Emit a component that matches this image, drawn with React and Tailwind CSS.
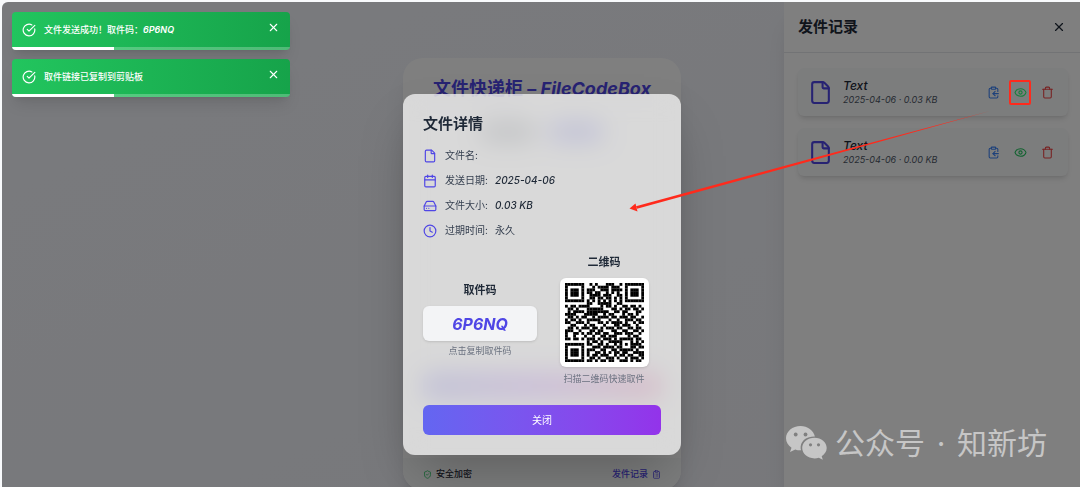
import React from 'react';
import {
  Calendar,
  CircleCheckBig,
  ClipboardCopy,
  ClipboardList,
  Clock,
  Eye,
  File,
  HardDrive,
  ShieldCheck,
  Trash,
  X,
} from 'lucide-react';

const qrRows = [
  '11111110010100011100101111111',
  '10000010001011110111001000001',
  '10111010111001110111101011101',
  '10111010110110010101001011101',
  '10111010011110111001101011101',
  '10000010011011011010101000001',
  '11111110101010101010101111111',
  '00000000110011111001100000000',
  '10110111100001011010011011010',
  '01101000111111000110101101101',
  '01011110111111110011011000110',
  '11110001111100101100010110100',
  '01101011001011110110111011001',
  '10110100111110001001001110110',
  '11001110100011010111101001011',
  '00110001011000100011011100100',
  '01101011101101011101100110110',
  '11100100011011000110011001101',
  '10011010110110110011101110010',
  '10010001001001101110000101100',
  '11011010111010111010111110110',
  '00000000101101001111100010101',
  '11111110110011010010101011110',
  '10000010001110111101100011011',
  '10111010111001100110111110100',
  '10111010100110101011011001111',
  '10111010101101110010110110011',
  '10000010011010011101001011101',
  '11111110110101101100111010110',
];

function QrCode() {
  return (
    <svg viewBox="0 0 29 29" className="w-[79px] h-[79px]">
      {qrRows.map((row, y) =>
        row.split('').map((cell, x) =>
          cell === '1' ? <rect key={`${x}-${y}`} x={x} y={y} width="1.04" height="1.04" fill="#000" /> : null
        )
      )}
    </svg>
  );
}

function Toast({ children }) {
  return (
    <div className="w-[278px] h-[38px] flex flex-col rounded overflow-hidden shadow-lg bg-linear-to-r from-[#22c55e] to-[#16a34a] text-white">
      <div className="flex-1 flex items-center gap-2 px-2.5">
        <CircleCheckBig size={14} />
        <p className="flex-1 text-[9px] font-medium">{children}</p>
        <button className="-mt-1">
          <X size={13} />
        </button>
      </div>
      <div className="h-[3px] bg-white/25">
        <div className="h-full w-[102px] bg-white" />
      </div>
    </div>
  );
}

function DetailRow({ icon: Icon, label, value, latin }) {
  return (
    <div className="flex items-center h-[25px] text-[10px] text-[#374151]">
      <Icon size={14} className="text-[#4f46e5] mr-2" />
      <span className="w-[50px]">{label}</span>
      <span className={latin ? 'italic font-medium text-[#1f2937]' : ''}>{value}</span>
    </div>
  );
}

function Record({ size, marked }) {
  return (
    <li className="flex items-center h-12 px-2.5 rounded-md bg-gray-50 shadow-md">
      <File size={25} className="text-[#4f46e5] mr-2.5" />
      <div className="flex-1 italic">
        <p className="text-xs leading-4 font-medium text-[#1f2937]">Text</p>
        <p className="text-[9px] leading-3 text-[#4b5563]">2025-04-06 · {size} KB</p>
      </div>
      <div className="flex gap-[5px]">
        <button className="w-[22px] h-[25px] flex items-center justify-center text-[#3b82f6]">
          <ClipboardCopy size={13} />
        </button>
        <button
          className={
            marked
              ? 'relative z-30 w-[22px] h-[25px] flex items-center justify-center rounded-xs text-[#16803c] border-2 border-[#ff2a1c]'
              : 'w-[22px] h-[25px] flex items-center justify-center text-[#22c55e]'
          }
        >
          <Eye size={13} />
        </button>
        <button className="w-[22px] h-[25px] flex items-center justify-center text-[#ef4444]">
          <Trash size={13} />
        </button>
      </div>
    </li>
  );
}

export default function App() {
  return (
    <div className="h-screen flex flex-col pt-[2px] pl-[2px] bg-slate-50 font-['Inter','Noto_Sans_CJK_SC',sans-serif]">
      <div className="relative flex-1 overflow-hidden rounded-tl-md bg-linear-to-br from-[#f3f5fb] to-[#eff0f6]">
        <main className="flex justify-center pt-14 pl-[2px]">
          <div className="w-[278px] rounded-[20px] overflow-hidden bg-white shadow-xl">
            <div className="h-[400px] px-5 pt-4">
              <h1 className="text-center text-lg leading-[30px] font-bold text-[#4f46e5] whitespace-nowrap">
                文件快递柜 – <span className="italic">FileCodeBox</span>
              </h1>
              <div className="flex justify-center gap-3 mt-[18px]">
                <div className="w-14 h-5 rounded-full bg-gray-500" />
                <div className="w-14 h-5 rounded-full bg-[#6366f1]" />
              </div>
              <div className="mt-[230px] h-7 rounded-lg bg-linear-to-r from-[#6366f1] via-[#a855f7] to-[#ec4899]" />
            </div>
            <footer className="h-8 px-5 flex items-center justify-between bg-gray-50 text-[9px] font-medium text-[#1f2937]">
              <span className="flex items-center gap-1">
                <ShieldCheck size={9} className="text-[#22c55e]" />
                安全加密
              </span>
              <button className="flex items-center gap-1 text-[#4f46e5]">
                发件记录
                <ClipboardList size={9} />
              </button>
            </footer>
          </div>
        </main>

        <aside className="absolute top-0 right-0 bottom-0 w-[296px] bg-white shadow-xl">
          <div className="h-[51px] flex items-center justify-between px-[14px] border-b border-gray-200">
            <h2 className="text-[15px] font-bold text-[#1f2937]">发件记录</h2>
            <button className="text-[#1f2937]">
              <X size={14} />
            </button>
          </div>
          <ul className="flex flex-col gap-3 pl-[14px] pr-3 pt-[15px]">
            <Record size="0.03" marked />
            <Record size="0.00" />
          </ul>
        </aside>

        <div className="absolute inset-0 z-10 bg-black/50 flex items-start justify-center pt-[92px] pl-[2px]">
          <div
            role="dialog"
            className="w-[278px] px-5 pt-[18px] pb-5 rounded-xl bg-white/70 backdrop-blur-md shadow-2xl"
          >
            <h2 className="text-[15px] leading-6 font-bold text-[#1f2937] mb-[7px]">文件详情</h2>
            <DetailRow icon={File} label="文件名:" />
            <DetailRow icon={Calendar} label="发送日期:" value="2025-04-06" latin />
            <DetailRow icon={HardDrive} label="文件大小:" value="0.03 KB" latin />
            <DetailRow icon={Clock} label="过期时间:" value="永久" />

            <div className="grid grid-cols-2 gap-2.5 items-center text-center mt-[11px]">
              <div>
                <h3 className="text-[11px] leading-4 font-bold text-[#1f2937] mb-2">取件码</h3>
                <button className="w-full h-[35px] rounded-md bg-[#f3f4f6] shadow text-base italic font-bold text-[#4f46e5]">
                  6P6NQ
                </button>
                <p className="mt-1 text-[9px] leading-3 text-[#6b7280]">点击复制取件码</p>
              </div>
              <div className="flex flex-col items-center">
                <h3 className="text-[11px] leading-4 font-bold text-[#1f2937] mb-2">二维码</h3>
                <div className="p-[5px] rounded-md bg-white shadow">
                  <QrCode />
                </div>
                <p className="mt-1.5 text-[9px] leading-3 text-[#6b7280]">扫描二维码快速取件</p>
              </div>
            </div>

            <button className="mt-5 w-full h-[30px] rounded-md bg-linear-to-r from-[#6366f1] to-[#9333ea] text-[10px] text-white">
              关闭
            </button>
          </div>
        </div>

        <div className="absolute top-2.5 left-2.5 z-20 flex flex-col gap-[9px]">
          <Toast>
            文件发送成功！取件码：<span className="italic font-semibold">6P6NQ</span>
          </Toast>
          <Toast>取件链接已复制到剪贴板</Toast>
        </div>

        <svg className="absolute top-[106px] left-[626px] z-20 w-[364px] h-[106px]" viewBox="0 0 364 106">
          <path d="M8 98.200 L180 51.500 L362 3 L180 53.700 L9 100.800 Z" fill="#ff2a1c" />
          <path d="M1.500 100.500 L7.500 95.500 L9.500 103.500 Z" fill="#ff2a1c" />
        </svg>

        <div className="absolute right-[33px] bottom-[22px] z-20 flex items-center text-[#c6c6c6]">
          <svg viewBox="0 0 41 34" className="w-[41px] h-[34px] mr-2" fill="currentColor">
            <path d="M14.500 0C6.500 0 0 5.500 0 12.300c0 3.900 2.100 7.200 5.500 9.500L4 26l5.300-2.600c1.800.6 3.500.8 5.700.8-.4-1.300-.5-2.600-.3-3.900C15.600 14 21.500 10.300 28.900 10.600 27.500 4.400 21.500 0 14.500 0z" />
            <path d="M28.500 11.800c-6.900 0-12.300 4.600-12.300 10.300s5.400 10.300 12.300 10.300c1.500 0 3-.2 4.300-.7l4 2-1.100-3.500c3-1.900 5-4.800 5-8.100 0-5.700-5.400-10.300-12.200-10.300z" />
            <g fill="#808080">
              <circle cx="9.700" cy="8.500" r="1.900" />
              <circle cx="19.500" cy="8.500" r="1.900" />
              <circle cx="24.500" cy="18.800" r="1.600" />
              <circle cx="32.500" cy="18.800" r="1.600" />
            </g>
          </svg>
          <p className="flex text-[30px] leading-[44px]">
            <span>公众号</span>
            <span className="w-8 text-center">·</span>
            <span>知新坊</span>
          </p>
        </div>
      </div>
    </div>
  );
}
